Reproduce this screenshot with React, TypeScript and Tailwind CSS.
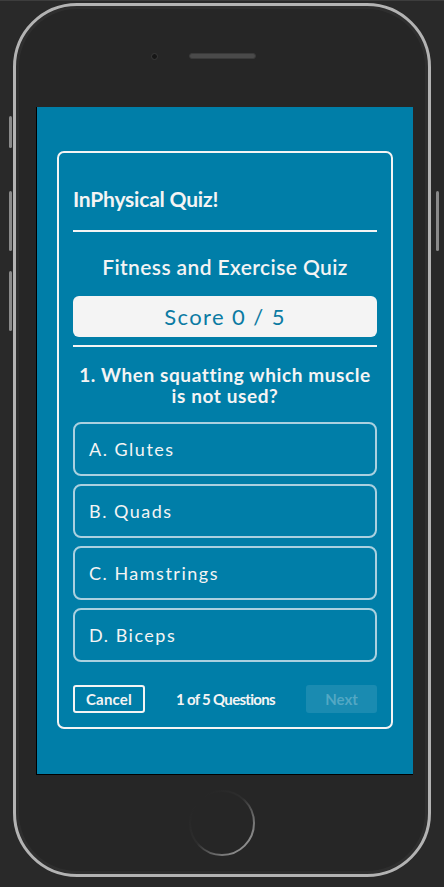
const options = ["A. Glutes", "B. Quads", "C. Hamstrings", "D. Biceps"];

const SideButton = ({ className }: { className: string }) => (
    <div className={`absolute w-[3px] rounded-sm bg-[#8a8a8a] ${className}`} />
);

const HomeButton = () => (
    <svg width="70" height="70" viewBox="0 0 70 70">
        <defs>
            <linearGradient id="hb" x1="0.15" y1="0.15" x2="0.85" y2="0.85">
                <stop offset="0" stopColor="#262626" />
                <stop offset="0.45" stopColor="#2e2e2e" />
                <stop offset="0.75" stopColor="#666" />
                <stop offset="1" stopColor="#8c8c8c" />
            </linearGradient>
        </defs>
        <circle cx="35" cy="35" r="32" fill="none" stroke="url(#hb)" strokeWidth="2" />
    </svg>
);

export default function App() {
    return (
        <div className="relative w-[444px] h-[887px] overflow-hidden bg-[#292929] border-t border-[#3d3d3d] pt-[2px] px-[13px] font-['Lato',sans-serif]">
            <SideButton className="left-[9px] top-[115px] h-[32px]" />
            <SideButton className="left-[9px] top-[190px] h-[60px]" />
            <SideButton className="left-[9px] top-[270px] h-[60px]" />
            <SideButton className="left-[436px] top-[190px] h-[60px]" />

            <div className="h-[874px] rounded-[64px] border-[3px] border-[#b3b3b3] bg-[#262626] shadow-[inset_0_0_0_3px_#2e2e2e] flex flex-col">
                <div className="h-[101px] flex items-center justify-center pb-[1px]">
                    <div className="w-[7px] h-[7px] rounded-full bg-[#161616] border border-[#3a3a3a]" />
                    <div className="w-[31px]" />
                    <div className="w-[67px] h-[6px] rounded-full bg-[#4a4a4a] border border-[#3a3a3a]" />
                    <div className="w-[38px]" />
                </div>

                <div className="ml-[20px] w-[377px] h-[668px] border-l border-b border-black bg-[#007ea8]">
                    <div className="mx-[20px] mt-[44px] h-[578px] rounded-[7px] border-2 border-[#f4f4f4] px-[14px] flex flex-col text-[#f4f4f4]">
                        <div className="pt-[32px] text-[21px] leading-[28px] font-bold tracking-[-0.2px]">InPhysical Quiz!</div>
                        <div className="mt-[17px] h-[2px] bg-[#f4f4f4]" />
                        <div className="mt-[21px] text-center text-[21px] leading-[28px] font-semibold tracking-[0.4px]">Fitness and Exercise Quiz</div>
                        <div className="mt-[15px] h-[41px] rounded-[6px] bg-[#f4f4f4] flex items-center justify-center text-[22px] text-[#0b7ba3] tracking-[1.4px]">
                            Score 0 / 5
                        </div>
                        <div className="mt-[8px] h-[2px] bg-[#f4f4f4]" />
                        <div className="mt-[17px] text-center text-[19px] leading-[21px] font-bold tracking-[0.6px]">
                            1. When squatting which muscle is not used?
                        </div>
                        <div className="mt-[16px] flex flex-col gap-[8px]">
                            {options.map(opt => (
                                <div key={opt} className="h-[54px] rounded-[8px] border-2 border-[#d4e6ee]/80 px-[14px] flex items-center text-[18px] tracking-[1.5px]">
                                    {opt}
                                </div>
                            ))}
                        </div>
                        <div className="mt-[23px] flex items-center justify-between">
                            <div className="w-[72px] h-[28px] rounded-[3px] border-2 border-[#f4f4f4] flex items-center justify-center text-[15px] font-bold tracking-[0.2px]">Cancel</div>
                            <div className="text-[15px] font-bold tracking-[-0.7px]">1 of 5 Questions</div>
                            <div className="w-[71px] h-[28px] rounded-[3px] bg-white/10 flex items-center justify-center text-[15px] font-bold text-white/25">Next</div>
                        </div>
                    </div>
                </div>

                <div className="mt-[13px] flex justify-center">
                    <HomeButton />
                </div>
            </div>
        </div>
    );
}
